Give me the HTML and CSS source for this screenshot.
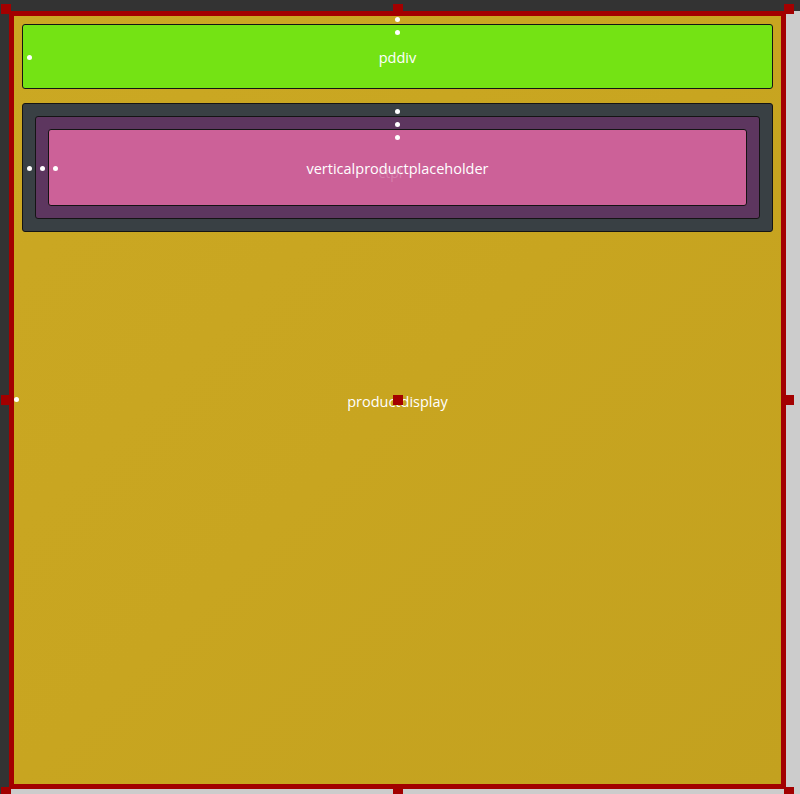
FILE: index.html
```html
<!DOCTYPE html>
<html lang="en">
<head>
    <meta charset="UTF-8">
    <meta name="viewport" content="width=device-width, initial-scale=1.0">
    <title>Layout Designer</title>
    <link rel="stylesheet" href="styles.css">
</head>
<body>
    <!-- Design surface -->
    <div class="workspace">
        <div class="productdisplay selected">
            <div class="pddiv element">
                <span class="label">pddiv</span>
            </div>

            <div class="holder element">
                <div class="holder-inner element">
                    <div class="placeholder element">
                        <span class="ghost">ctpl</span>
                        <span class="label">verticalproductplaceholder</span>
                    </div>
                </div>
            </div>

            <span class="display-label">productdisplay</span>

            <!-- Selection handles -->
            <span class="handle tl"></span>
            <span class="handle tc"></span>
            <span class="handle tr"></span>
            <span class="handle ml"></span>
            <span class="handle mc"></span>
            <span class="handle mr"></span>
            <span class="handle bl"></span>
            <span class="handle bc"></span>
            <span class="handle br"></span>
        </div>
    </div>
</body>
</html>
```

FILE: styles.css
```css
:root {
    --red: #a30000;
    --dot: #ffffff;
}

/* Page */
body {
    margin: 0;
    background: #cccccc;
    font-family: "Open Sans", "Noto Sans", sans-serif;
    overflow: hidden;
}

/* Dark strips on top and left, light gray on the right and bottom */
.workspace {
    height: 794px;
    box-sizing: border-box;
    border-top: 11px solid #333333;
    border-left: 9px solid #333333;
    padding-right: 14px;
    padding-bottom: 5px;
}

/* Selected root element */
.productdisplay {
    position: relative;
    height: 100%;
    box-sizing: border-box;
    border: 5px solid var(--red);
    background: linear-gradient(135deg, #cba823 0%, #c8a520 50%, #c3a11f 100%);
    padding: 8px;
    display: flex;
    flex-direction: column;
    gap: 14px;
}

/* Anchor dots of the root */
.productdisplay::before,
.productdisplay::after {
    content: "";
    position: absolute;
    width: 5px;
    height: 5px;
    border-radius: 50%;
    background: var(--dot);
}

.productdisplay::before {
    top: 1px;
    left: calc(50% - 3px);
}

.productdisplay::after {
    left: 0;
    top: calc(50% - 3px);
}

/* Child elements */
.element {
    position: relative;
    box-sizing: border-box;
    border: 1px solid #141414;
    border-radius: 3px;
}

.element::before,
.element::after {
    content: "";
    position: absolute;
    width: 5px;
    height: 5px;
    border-radius: 50%;
    background: var(--dot);
}

.element::before {
    top: 5px;
    left: calc(50% - 3px);
}

.element::after {
    left: 4px;
    top: calc(50% - 2px);
}

.pddiv {
    height: 65px;
    background: #74e314;
    display: flex;
    align-items: center;
    justify-content: center;
}

.holder {
    background: #394044;
    padding: 12px;
}

.holder-inner {
    background: #5d365f;
    padding: 12px;
}

.placeholder {
    height: 77px;
    background: #cc6198;
    display: flex;
    align-items: center;
    justify-content: center;
}

/* Element names */
.label,
.display-label {
    color: #ffffff;
    font-size: 14.5px;
    line-height: 1;
    padding-top: 4px;
}

.display-label {
    position: absolute;
    top: 50%;
    left: 0;
    right: 0;
    text-align: center;
    transform: translateY(-50%);
}

.ghost {
    position: absolute;
    left: calc(50% - 19px);
    top: 33px;
    font-size: 14px;
    color: rgba(255, 235, 245, 0.22);
}

/* Resize handles */
.handle {
    position: absolute;
    width: 10px;
    height: 10px;
    background: var(--red);
    z-index: 2;
}

.tl { left: -13px; top: -12px; }
.tc { left: calc(50% - 5px); top: -12px; }
.tr { right: -13px; top: -12px; }
.ml { left: -13px; top: calc(50% - 5px); }
.mc { left: calc(50% - 5px); top: calc(50% - 5px); }
.mr { right: -13px; top: calc(50% - 5px); }
.bl { left: -13px; bottom: -13px; }
.bc { left: calc(50% - 5px); bottom: -13px; }
.br { right: -13px; bottom: -13px; }
```
